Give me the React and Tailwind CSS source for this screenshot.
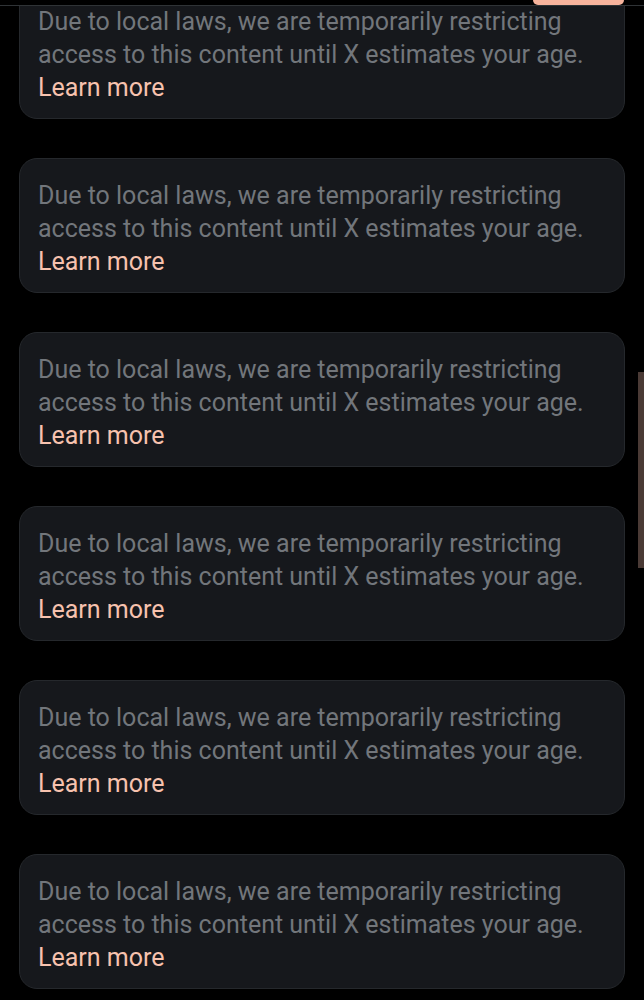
import React from 'react';

const MESSAGE = 'Due to local laws, we are temporarily restricting access to this content until X estimates your age.';

const NoticeCard = ({ first }) => (
    <div
        className={
            'mx-[19px] rounded-[18px] border border-[#25282c] bg-[#16181c] pl-[18px] pr-4 pt-[20px] pb-[14px] ' +
            (first ? '-mt-[22px]' : 'mt-[39px]')
        }
    >
        <p className="text-[25px] leading-[33px] text-[#72767b]">
            {MESSAGE}{' '}
            <br />
            <a href="#" className="text-[#f7c2ae]">Learn more</a>
        </p>
    </div>
);

export default function App() {
    return (
        <div
            className="relative h-[1000px] w-full overflow-hidden bg-black"
            style={{ fontFamily: '"Roboto", "Liberation Sans", sans-serif' }}
        >
            {/* tab header strip */}
            <div className="relative z-10 h-[6px] border-b border-[#2f3336] bg-black">
                <div className="absolute right-[20px] top-0 h-[5px] w-[91px] rounded-b-full bg-[#f7b39c]" />
            </div>

            <div className="flex flex-col">
                {[0, 1, 2, 3, 4, 5].map(i => (
                    <NoticeCard key={i} first={i === 0} />
                ))}
            </div>

            {/* scroll thumb */}
            <div className="absolute right-0 top-[372px] h-[196px] w-[6px] bg-[#4a3a35]" />
        </div>
    );
}
